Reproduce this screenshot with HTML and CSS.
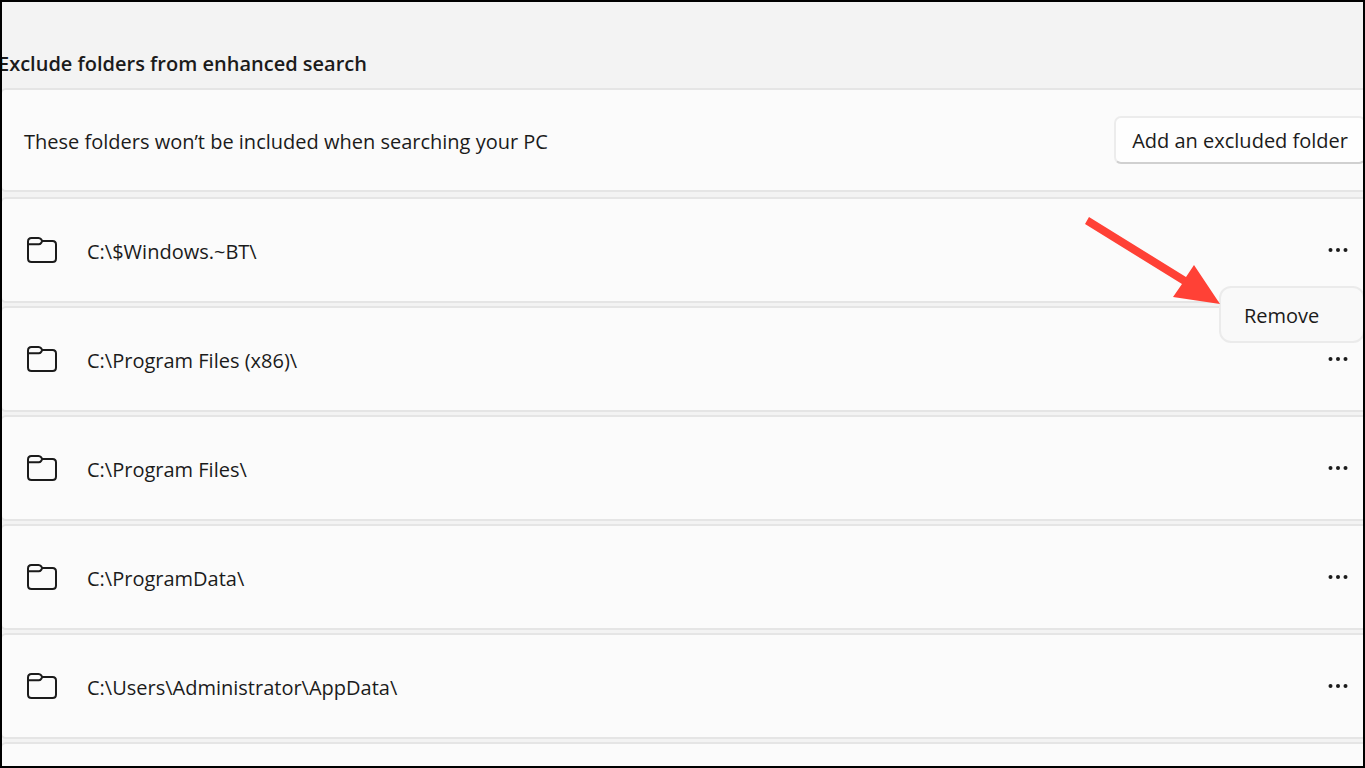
FILE: index.html
```html
<!DOCTYPE html>
<html lang="en">
<head>
<meta charset="utf-8">
<title>Exclude folders from enhanced search</title>
<link rel="stylesheet" href="styles.css">
</head>
<body>
<svg class="sprite" aria-hidden="true">
  <symbol id="folder" viewBox="0 0 32 28">
    <path d="M2 8.300V5.500Q2 2 5.500 2H12.500Q14 2 15 3.200L16.300 5H26.500Q30 5 30 8.500V22.500Q30 26 26.500 26H5.500Q2 26 2 22.500V8.300H12.800Q14.200 8.300 15 7.200L16.300 5" fill="none" stroke="currentColor" stroke-width="2" stroke-linejoin="round"/>
  </symbol>
  <symbol id="more" viewBox="0 0 20 6">
    <g fill="currentColor"><circle cx="2.500" cy="3" r="2"/><circle cx="10" cy="3" r="2"/><circle cx="17.500" cy="3" r="2"/></g>
  </symbol>
</svg>
<main class="window">
  <h1 class="title">Exclude folders from enhanced search</h1>
  <section class="card intro">
    <p class="label">These folders won’t be included when searching your PC</p>
    <button class="add" type="button">Add an excluded folder</button>
  </section>
  <ul class="folders">
    <li class="card row">
      <svg class="folder"><use href="#folder"/></svg>
      <span class="label">C:\$Windows.~BT\</span>
      <button class="more" type="button" aria-label="More options for C:\$Windows.~BT\"><svg class="dots"><use href="#more"/></svg></button>
      <div class="menu"><button class="menu-item" type="button">Remove</button></div>
      <svg class="arrow" viewBox="0 0 136 88" aria-hidden="true"><path d="M4 0L101 60L109 48L135 87L88 80L97 67L0 7Z" fill="#ff4136"/></svg>
    </li>
    <li class="card row">
      <svg class="folder"><use href="#folder"/></svg>
      <span class="label">C:\Program Files (x86)\</span>
      <button class="more" type="button" aria-label="More options for C:\Program Files (x86)\"><svg class="dots"><use href="#more"/></svg></button>
    </li>
    <li class="card row">
      <svg class="folder"><use href="#folder"/></svg>
      <span class="label">C:\Program Files\</span>
      <button class="more" type="button" aria-label="More options for C:\Program Files\"><svg class="dots"><use href="#more"/></svg></button>
    </li>
    <li class="card row">
      <svg class="folder"><use href="#folder"/></svg>
      <span class="label">C:\ProgramData\</span>
      <button class="more" type="button" aria-label="More options for C:\ProgramData\"><svg class="dots"><use href="#more"/></svg></button>
    </li>
    <li class="card row">
      <svg class="folder"><use href="#folder"/></svg>
      <span class="label">C:\Users\Administrator\AppData\</span>
      <button class="more" type="button" aria-label="More options for C:\Users\Administrator\AppData\"><svg class="dots"><use href="#more"/></svg></button>
    </li>
    <li class="card row"></li>
  </ul>
</main>
</body>
</html>
```
FILE: styles.css
```css
* { box-sizing: border-box; }

body {
  margin: 0;
  background: #f3f3f3;
  color: #1b1b1b;
  font: 20px/28px "Segoe UI", "Open Sans", "Noto Sans", sans-serif;
}

button {
  font: inherit;
  color: inherit;
  white-space: nowrap;
}

.sprite {
  position: absolute;
  width: 0;
  height: 0;
}

.window {
  height: 100vh;
  overflow: hidden;
  border: 2px solid #000;
  padding-top: 48px;
}

.title {
  margin: 0 0 10px -4px;
  font-size: 20px;
  line-height: 28px;
  font-weight: 600;
}

.card {
  display: flex;
  align-items: center;
  margin: 0 -8px 0 -2px;
  background: #fbfbfb;
  border: 2px solid #e5e5e5;
  border-radius: 6px;
}

.intro {
  min-height: 104px;
  padding: 0 3px 0 22px;
  margin-bottom: 5px;
}

.label {
  flex: 1;
  margin: 0;
  padding-top: 3px;
}

.add {
  height: 48px;
  padding: 2px 16px 0;
  background: #fefefe;
  border: 2px solid #ececec;
  border-bottom-color: #d0d0d0;
  border-radius: 7px;
}

.folders {
  display: flex;
  flex-direction: column;
  gap: 3px;
  margin: 0;
  padding: 0;
  list-style: none;
}

.row {
  position: relative;
  min-height: 106px;
  padding: 0 13px 0 24px;
  gap: 29px;
}

.folder {
  width: 32px;
  height: 28px;
}

.more {
  display: grid;
  place-items: center;
  width: 36px;
  height: 36px;
  padding: 0;
  border: 0;
  background: none;
}

.dots {
  width: 20px;
  height: 6px;
}

.menu {
  position: absolute;
  z-index: 1;
  top: 87px;
  right: 4px;
  width: 146px;
  height: 57px;
  background: #f9f9f9;
  border: 2px solid #ebebeb;
  border-radius: 12px;
}

.menu-item {
  width: 100%;
  height: 100%;
  padding: 2px 23px 0;
  border: 0;
  background: none;
  text-align: left;
}

.arrow {
  position: absolute;
  z-index: 2;
  top: 18px;
  right: 148px;
  width: 136px;
  height: 88px;
}
```
